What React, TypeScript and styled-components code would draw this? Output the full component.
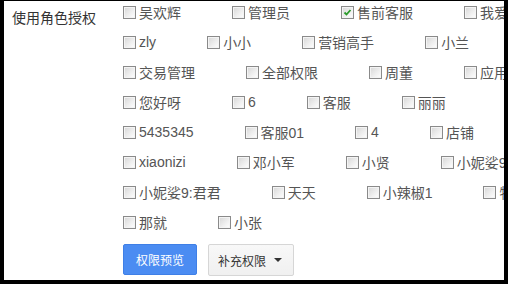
import React from 'react';
import styled, { createGlobalStyle } from 'styled-components';

type Role = { name: string; checked?: boolean };

const rows: Role[][] = [
    [{ name: '吴欢辉' }, { name: '管理员' }, { name: '售前客服', checked: true }, { name: '我爱客服' }],
    [{ name: 'zly' }, { name: '小小' }, { name: '营销高手' }, { name: '小兰' }],
    [{ name: '交易管理' }, { name: '全部权限' }, { name: '周董' }, { name: '应用管理' }],
    [{ name: '您好呀' }, { name: '6' }, { name: '客服' }, { name: '丽丽' }],
    [{ name: '5435345' }, { name: '客服01' }, { name: '4' }, { name: '店铺' }],
    [{ name: 'xiaonizi' }, { name: '邓小军' }, { name: '小贤' }, { name: '小妮娑9:君君' }],
    [{ name: '小妮娑9:君君' }, { name: '天天' }, { name: '小辣椒1' }, { name: '物流' }],
    [{ name: '那就' }, { name: '小张' }],
];

const GlobalStyle = createGlobalStyle`
    html, body {
        margin: 0;
        padding: 0;
        background: #000;
    }
    body {
        font-family: "Liberation Sans", "Noto Sans CJK SC", sans-serif;
    }
`;

const Frame = styled.div`
    margin: 1px 4px 0 4px;
    width: 500px;
    height: 279px;
    background: #fff;
    overflow: hidden;
`;

const FormRow = styled.div`
    display: flex;
    margin-top: -4px;
    padding-left: 8px;
`;

const FieldLabel = styled.div`
    flex: 0 0 110px;
    padding-top: 11px;
    font-size: 14px;
    line-height: 20px;
    color: #333;
`;

const Field = styled.div`
    flex: 1;
    min-width: 0;
`;

const RoleRow = styled.div`
    display: flex;
    flex-wrap: nowrap;
    height: 30px;
    align-items: center;
    white-space: nowrap;
`;

const RoleItem = styled.label`
    display: flex;
    align-items: center;
    flex: none;
    margin-right: 50px;
    font-size: 14px;
    color: #555;
    cursor: pointer;
`;

const Box = styled.span<{ $checked?: boolean }>`
    position: relative;
    box-sizing: border-box;
    width: 13px;
    height: 13px;
    margin: 0 3px 0 1px;
    border: 1px solid #8a8a8a;
    background: linear-gradient(135deg, #d6d6d6 0%, #f0f0f0 60%, #ffffff 100%);
    box-shadow: inset 0 0 0 1px #f4f4f4;

    svg {
        position: absolute;
        left: 1px;
        top: 1px;
    }
`;

const Actions = styled.div`
    display: flex;
    align-items: flex-start;
    gap: 11px;
    margin-top: 7px;
    padding-left: 1px;
`;

const PrimaryButton = styled.button`
    box-sizing: border-box;
    height: 31px;
    padding: 0 12px;
    border: 1px solid #3f7fe6;
    border-radius: 2px;
    background: #4b8cf2;
    color: #fff;
    font-family: inherit;
    font-size: 12px;
`;

const DropButton = styled.button`
    box-sizing: border-box;
    display: flex;
    align-items: center;
    height: 32px;
    padding: 0 11px 0 9px;
    border: 1px solid #d6d6d6;
    border-radius: 2px;
    background: linear-gradient(#f8f8f8, #f0f0f0);
    color: #333;
    font-family: inherit;
    font-size: 12px;
`;

const Caret = styled.span`
    margin-left: 8px;
    width: 0;
    height: 0;
    border-left: 4px solid transparent;
    border-right: 4px solid transparent;
    border-top: 4px solid #333;
`;

const CheckBox = ({ checked }: { checked?: boolean }) => (
    <Box $checked={checked}>
        {checked && (
            <svg width="9" height="9" viewBox="0 0 9 9">
                <path d="M1.5 4.5 L3.5 6.5 L7.5 2" fill="none" stroke="#2a9a2a" strokeWidth="1.8" />
            </svg>
        )}
    </Box>
);

const App = () => {
    return (
        <>
            <GlobalStyle />
            <Frame>
                <FormRow>
                    <FieldLabel>使用角色授权</FieldLabel>
                    <Field>
                        {rows.map((row, i) => (
                            <RoleRow key={i}>
                                {row.map((role) => (
                                    <RoleItem key={role.name}>
                                        <CheckBox checked={role.checked} />
                                        {role.name}
                                    </RoleItem>
                                ))}
                            </RoleRow>
                        ))}
                        <Actions>
                            <PrimaryButton>权限预览</PrimaryButton>
                            <DropButton>
                                补充权限
                                <Caret />
                            </DropButton>
                        </Actions>
                    </Field>
                </FormRow>
            </Frame>
        </>
    );
};

export default App;
